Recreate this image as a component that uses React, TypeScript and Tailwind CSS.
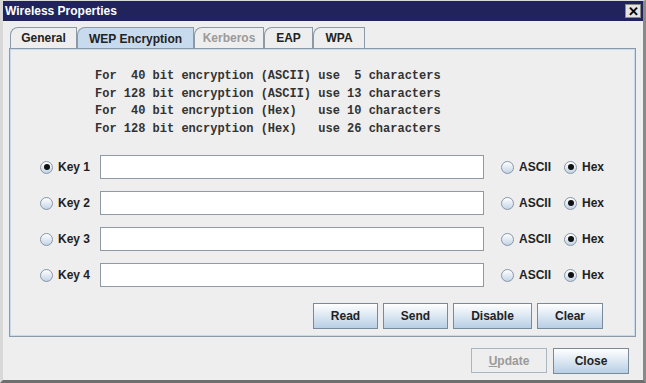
import type { ReactNode } from "react";

function Radio({ on }: { on?: boolean }) {
  return (
    <span className="flex h-[13px] w-[13px] shrink-0 items-center justify-center rounded-full border border-[#8796a6] bg-gradient-to-b from-white to-[#c3d4e6]">
      {on && <span className="h-[6px] w-[6px] rounded-full bg-[#111]" />}
    </span>
  );
}

function Btn({ children, w }: { children: ReactNode; w: string }) {
  return (
    <button
      className={`${w} h-[26px] border border-[#7a8a99] bg-gradient-to-b from-white to-[#b8cfe5] text-[12px] font-bold text-[#222]`}
    >
      {children}
    </button>
  );
}

function Tab({ label, w, active, disabled }: { label: string; w: string; active?: boolean; disabled?: boolean }) {
  return (
    <div
      className={`${w} flex h-[21px] items-center justify-center rounded-tl-[8px] border border-b-0 border-[#8c9aa8] text-[12px] font-bold ${
        active ? "-mb-px h-[22px] bg-[#c8daee] text-[#222]" : "bg-[#eeeeee]"
      } ${disabled ? "text-[#9a9a9a]" : "text-[#222]"}`}
    >
      {label}
    </div>
  );
}

const keys = [
  { n: 1, on: true },
  { n: 2, on: false },
  { n: 3, on: false },
  { n: 4, on: false },
];

const lines = [
  "For  40 bit encryption (ASCII) use  5 characters",
  "For 128 bit encryption (ASCII) use 13 characters",
  "For  40 bit encryption (Hex)   use 10 characters",
  "For 128 bit encryption (Hex)   use 26 characters",
];

export default function App() {
  return (
    <div className="flex h-[383px] w-[646px] flex-col border-t border-l-[3px] border-r-[3px] border-b-[3px] border-t-[#dadada] border-l-[#d8d8d8] border-r-[#8a8a8a] border-b-[#6e6e6e] bg-[#eeeeee] font-['Liberation_Sans',Arial,sans-serif]">
      {/* title bar */}
      <div className="flex h-[20px] shrink-0 items-center justify-between bg-[#20235c] pl-[2px] pr-[2px]">
        <span className="text-[12px] font-bold text-white">Wireless Properties</span>
        <span className="flex h-[14px] w-[16px] items-center justify-center border border-[#8a8a8a] bg-[#e4e4e4] text-[13px] font-bold leading-none text-black">
          ✕
        </span>
      </div>

      <div className="flex flex-1 flex-col pl-[6px] pr-[7px] pt-[6px]">
        {/* tabs */}
        <div className="flex items-end pl-[1px]">
          <Tab label="General" w="w-[67px]" />
          <Tab label="WEP Encryption" w="w-[117px]" active />
          <Tab label="Kerberos" w="w-[70px]" disabled />
          <Tab label="EAP" w="w-[49px]" />
          <Tab label="WPA" w="w-[52px]" />
        </div>

        {/* panel */}
        <div className="flex h-[289px] flex-col border border-[#8c9aa8] shadow-[inset_1px_1px_0_#c8daee,inset_-1px_-1px_0_#c8daee]">
          <div className="pl-[85px] pt-[19px] font-['Liberation_Mono','Courier_New',monospace] text-[12px] font-bold leading-[17.5px] text-[#333]">
            {lines.map((l) => (
              <div key={l} className="whitespace-pre">
                {l}
              </div>
            ))}
          </div>

          <div className="mt-[17px] flex flex-col gap-[12px] pl-[30px]">
            {keys.map((k) => (
              <div key={k.n} className="flex h-[24px] items-center">
                <div className="flex w-[60px] items-center gap-[5px]">
                  <Radio on={k.on} />
                  <span className="text-[12px] font-bold text-[#222]">Key {k.n}</span>
                </div>
                <div className="h-[24px] w-[384px] border border-[#8e9aa6] bg-white" />
                <div className="ml-[17px] flex items-center gap-[5px]">
                  <Radio />
                  <span className="text-[12px] font-bold text-[#222]">ASCII</span>
                </div>
                <div className="ml-[13px] flex items-center gap-[5px]">
                  <Radio on />
                  <span className="text-[12px] font-bold text-[#222]">Hex</span>
                </div>
              </div>
            ))}
          </div>

          <div className="mt-[16px] flex justify-end gap-[5px] pr-[32px]">
            <Btn w="w-[65px]">Read</Btn>
            <Btn w="w-[65px]">Send</Btn>
            <Btn w="w-[79px]">Disable</Btn>
            <Btn w="w-[66px]">Clear</Btn>
          </div>
        </div>

        {/* bottom buttons */}
        <div className="mt-[11px] flex justify-end gap-[6px] pr-[7px]">
          <button className="h-[25px] w-[76px] border border-[#a9b6c3] bg-[#eeeeee] text-[12px] font-bold text-[#9a9a9a]">
            <span className="underline">U</span>pdate
          </button>
          <Btn w="w-[76px] h-[25px]">Close</Btn>
        </div>
      </div>
    </div>
  );
}
